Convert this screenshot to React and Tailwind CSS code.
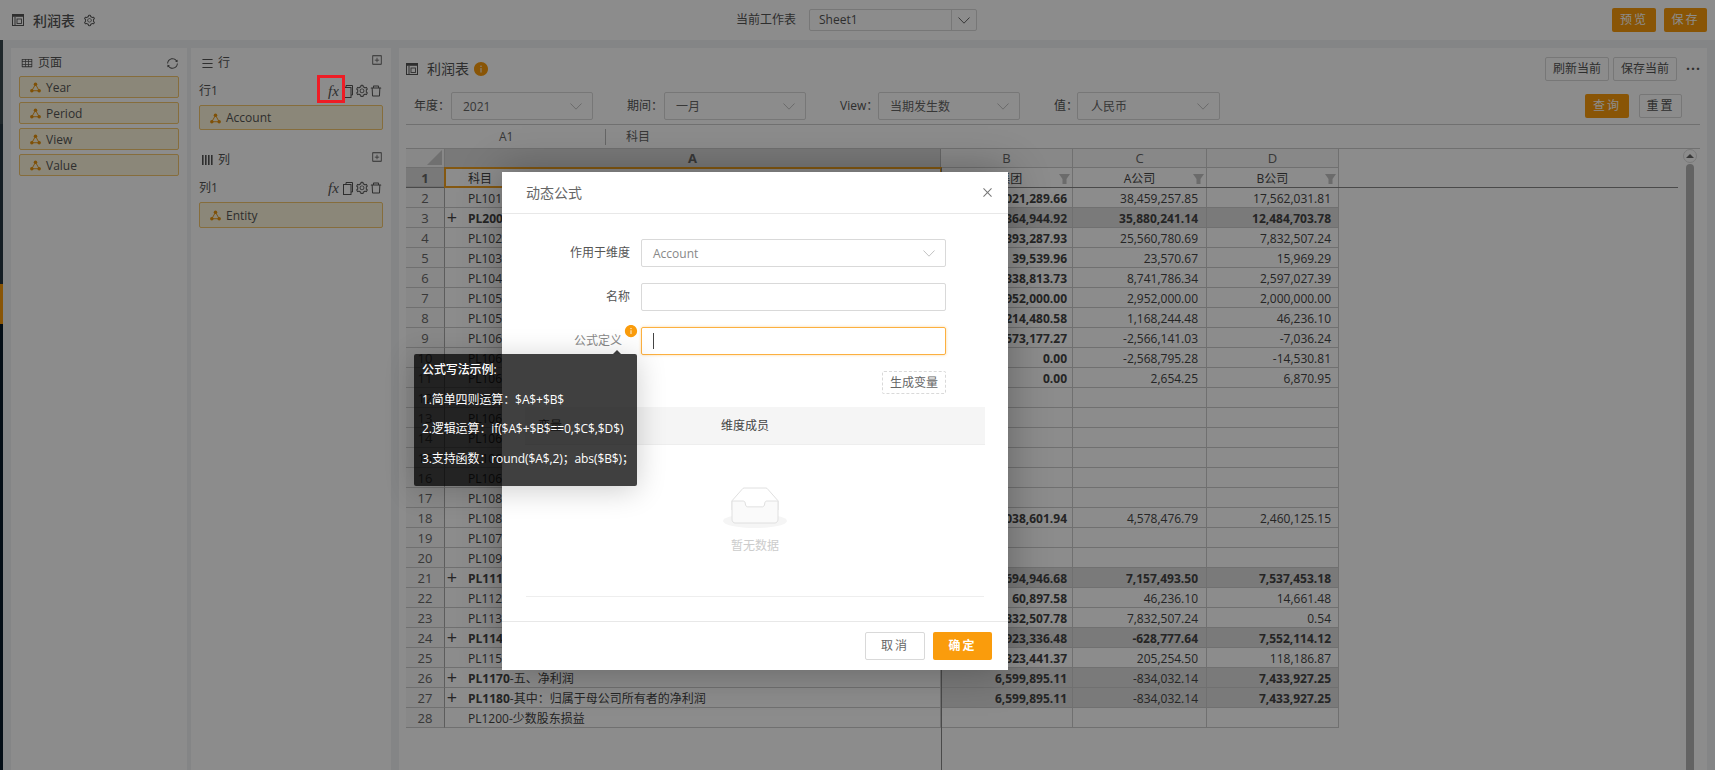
import React from "react";
import { AiOutlineSetting, AiOutlineSync, AiOutlineTable, AiOutlineMenu, AiOutlinePlusSquare, AiOutlineDelete, AiFillInfoCircle, AiOutlineClose } from "react-icons/ai";

const rows = [
  { label: "科目", b: "A集团", c: "A公司", d: "B公司", head: true },
  { label: "PL1010", b: "56,021,289.66", c: "38,459,257.85", d: "17,562,031.81" },
  { label: "PL2000", b: "48,364,944.92", c: "35,880,241.14", d: "12,484,703.78", fold: true, shade: true },
  { label: "PL1020", b: "33,393,287.93", c: "25,560,780.69", d: "7,832,507.24" },
  { label: "PL1030", b: "39,539.96", c: "23,570.67", d: "15,969.29" },
  { label: "PL1040", b: "11,338,813.73", c: "8,741,786.34", d: "2,597,027.39" },
  { label: "PL1050", b: "4,952,000.00", c: "2,952,000.00", d: "2,000,000.00" },
  { label: "PL1055", b: "1,214,480.58", c: "1,168,244.48", d: "46,236.10" },
  { label: "PL1060", b: "-2,573,177.27", c: "-2,566,141.03", d: "-7,036.24" },
  { label: "PL1061", b: "0.00", c: "-2,568,795.28", d: "-14,530.81" },
  { label: "PL1062", b: "0.00", c: "2,654.25", d: "6,870.95" },
  { label: "PL1063" },
  { label: "PL1064" },
  { label: "PL1065" },
  { label: "PL1066" },
  { label: "PL1067" },
  { label: "PL1080" },
  { label: "PL1085", b: "7,038,601.94", c: "4,578,476.79", d: "2,460,125.15" },
  { label: "PL1070" },
  { label: "PL1090" },
  { label: "PL1110", b: "14,694,946.68", c: "7,157,493.50", d: "7,537,453.18", fold: true, shade: true },
  { label: "PL1120", b: "60,897.58", c: "46,236.10", d: "14,661.48" },
  { label: "PL1130", b: "7,832,507.78", c: "7,832,507.24", d: "0.54" },
  { label: "PL1140", b: "6,923,336.48", c: "-628,777.64", d: "7,552,114.12", fold: true, shade: true },
  { label: "PL1150", b: "323,441.37", c: "205,254.50", d: "118,186.87" },
  { label: "PL1170-五、净利润", b: "6,599,895.11", c: "-834,032.14", d: "7,433,927.25", fold: true, shade: true, thinC: true },
  { label: "PL1180-其中：归属于母公司所有者的净利润", b: "6,599,895.11", c: "-834,032.14", d: "7,433,927.25", fold: true, shade: true, thinC: true },
  { label: "PL1200-少数股东损益" },
];

const ReportIcon = ({ className }) => (
  <svg viewBox="0 0 12 12" className={className} fill="none" stroke="currentColor">
    <rect x="0.5" y="0.5" width="11" height="11" strokeWidth="1" />
    <rect x="0.5" y="0.5" width="11" height="2" fill="currentColor" strokeWidth="0.6" />
    <path d="M3 3v8.5" strokeWidth="1" />
    <rect x="5" y="5" width="4.5" height="4.5" strokeWidth="0.9" />
  </svg>
);

const DimIcon = () => (
  <svg viewBox="0 0 12 12" className="h-[11px] w-[11px] shrink-0 text-[#e8930c]" fill="currentColor" stroke="currentColor">
    <path d="M6 2.5 2 9.5h8z" fill="none" strokeWidth="1" />
    <circle cx="6" cy="2.5" r="1.9" stroke="none" />
    <circle cx="2" cy="9.5" r="1.9" stroke="none" />
    <circle cx="10" cy="9.5" r="1.9" stroke="none" />
  </svg>
);

const Chevron = ({ className }) => (
  <svg viewBox="0 0 12 7" className={className} fill="none" stroke="currentColor" strokeWidth="0.9">
    <path d="M0.5 0.5 6 6.2l5.5-5.7" />
  </svg>
);

const CopyIcon = () => (
  <svg viewBox="0 0 10 13" className="h-[13px] w-[10px] shrink-0" fill="none" stroke="currentColor" strokeWidth="1">
    <path d="M3 2.5V0.5h6.5v9.5H8" />
    <rect x="0.5" y="2.5" width="7.5" height="10" />
  </svg>
);

const Funnel = () => (
  <svg viewBox="0 0 11 10" className="h-[10px] w-[11px] text-[#c4c4c4]" fill="currentColor">
    <path d="M0 0h11L7.5 5v5h-4V5z" />
  </svg>
);

const Chip = ({ name, h = "h-[22px]" }) => (
  <div className={`flex ${h} items-center gap-[5px] rounded-[2px] border border-[#f5c76e] bg-[#fdf6dc] pl-[10px] pt-[1px] text-[12px] text-[#555]`}>
    <DimIcon />
    {name}
  </div>
);

const Select = ({ value, className }) => (
  <div className={`flex h-[28px] items-center justify-between rounded-[2px] border border-[#d9d9d9] pl-[11px] pr-[10px] text-[12px] text-[#666] ${className}`}>
    <span className="pt-[1px]">{value}</span>
    <Chevron className="h-[7px] w-[12px] text-[#bbb]" />
  </div>
);

const OrangeBtn = ({ children, className = "" }) => (
  <button className={`flex h-[24px] items-center justify-center rounded-[2px] bg-[#fa9c0c] text-[12px] tracking-[2px] text-white ${className}`}>{children}</button>
);

const GhostBtn = ({ children, className = "" }) => (
  <button className={`flex h-[24px] items-center justify-center rounded-[2px] border border-[#d9d9d9] text-[12px] text-[#555] ${className}`}>{children}</button>
);

const ToolIcons = () => (
  <div className="flex items-center text-[#555]">
    <span className="mr-[3px] w-[12px] font-['Liberation_Serif',serif] text-[15px] italic leading-none">fx</span>
    <CopyIcon />
    <AiOutlineSetting className="ml-[2px] h-[14px] w-[14px]" />
    <AiOutlineDelete className="h-[14px] w-[14px]" />
  </div>
);

const SheetRow = ({ row, index }) => {
  const first = index === 0;
  const numCls = first ? "bg-[#dcdcdc]" : "bg-[#f7f7f7]";
  const bgCls = row.shade ? "bg-[#dedede]" : "";
  return (
    <div className={`flex h-[20px] w-[1272px] text-[12px] leading-[21px] text-[#444] ${first ? "border-b border-[#888]" : ""}`}>
      <div className={`w-[39px] shrink-0 border-b border-r border-b-[#ccc] border-r-[#aaa] text-center text-[13px] text-[#666] ${numCls} ${first ? "font-bold" : ""}`}>{index + 1}</div>
      <div className={`flex w-[496px] shrink-0 border-b border-r border-[#ccc] ${first ? "outline-2 -outline-offset-1 outline-[#f0a020]" : ""}`}>
        <span className="mr-[9px] w-[14px] shrink-0 text-center text-[18px] font-medium leading-[18px]">{row.fold ? "+" : ""}</span>
        <span className="truncate">
          {row.fold && row.label.includes("-") ? (
            <>
              <b>{row.label.split("-")[0]}</b>-{row.label.split("-")[1]}
            </>
          ) : row.fold ? <b>{row.label}</b> : row.label}
        </span>
      </div>
      {first ? (
        <>
          {[["w-[132px]", row.b], ["w-[134px]", row.c], ["w-[132px]", row.d]].map(([w, t]) => (
            <div key={t} className={`relative ${w} shrink-0 border-r border-[#ccc] text-center`}>
              {t}
              <span className="absolute right-[2px] top-[6px]"><Funnel /></span>
            </div>
          ))}
        </>
      ) : (
        <>
          <div className={`w-[132px] shrink-0 truncate border-b border-r border-[#ccc] pr-[5px] text-right font-bold ${bgCls}`}>{row.b}</div>
          <div className={`w-[134px] shrink-0 truncate border-b border-r border-[#ccc] pr-[8px] text-right ${bgCls} ${row.shade && !row.thinC ? "font-bold pr-[6px]" : ""}`}>{row.c}</div>
          <div className={`w-[132px] shrink-0 truncate border-b border-r border-[#ccc] pr-[7px] text-right ${bgCls} ${row.shade ? "font-bold pr-[5px]" : ""}`}>{row.d}</div>
        </>
      )}
    </div>
  );
};

export default function App() {
  return (
    <div className="relative h-[770px] w-[1715px] overflow-hidden bg-[#f0f2f5] font-['Open_Sans','Noto_Sans_CJK_SC',sans-serif] text-[12px] text-[#444]">
      <header className="flex h-[40px] items-center bg-white text-[#555]">
        <div className="flex w-[736px] items-center pl-[12px]">
          <ReportIcon className="h-[12px] w-[12px]" />
          <span className="ml-[9px] text-[14px] font-medium">利润表</span>
          <AiOutlineSetting className="ml-[8px] h-[13px] w-[13px]" />
        </div>
        <span className="w-[73px] text-[12px]">当前工作表</span>
        <div className="flex h-[22px] w-[168px] rounded-[2px] border border-[#d9d9d9]">
          <span className="flex-1 pl-[9px] text-[12px] leading-[20px]">Sheet1</span>
          <span className="flex w-[25px] items-center justify-center border-l border-[#d9d9d9]">
            <Chevron className="h-[7px] w-[12px]" />
          </span>
        </div>
        <div className="ml-auto flex gap-[8px] pr-[8px]">
          <OrangeBtn className="w-[44px]">预览</OrangeBtn>
          <OrangeBtn className="w-[43px]">保存</OrangeBtn>
        </div>
      </header>

      <div className="flex h-[730px]">
        <div className="flex w-[3px] shrink-0 flex-col">
          <div className="h-[84px] bg-[#3a474f]" />
          <div className="h-[160px] bg-[#263540]" />
          <div className="h-[40px] bg-[#fa9c0c]" />
          <div className="flex-1 bg-[#091b28]" />
        </div>
        <div className="flex flex-1 pl-[8px] pt-[8px]">
          <section className="mr-[4px] w-[176px] bg-white px-[8px] pt-[7px]">
            <div className="flex h-[21px] items-center pb-[5px] text-[#555]">
              <AiOutlineTable className="ml-[2px] h-[12px] w-[12px]" />
              <span className="ml-[5px]">页面</span>
              <AiOutlineSync className="ml-auto h-[13px] w-[13px]" />
            </div>
            <div className="flex flex-col gap-[4px]">
              <Chip name="Year" />
              <Chip name="Period" />
              <Chip name="View" />
              <Chip name="Value" />
            </div>
          </section>

          <section className="mr-[8px] w-[200px] bg-white px-[8px] pt-[7px] text-[#555]">
            <div className="flex h-[16px] items-center">
              <AiOutlineMenu className="ml-[2px] h-[13px] w-[13px]" />
              <span className="ml-[4px]">行</span>
              <AiOutlinePlusSquare className="mb-[6px] ml-auto h-[12px] w-[12px]" />
            </div>
            <div className="mt-[9px] flex h-[22px] items-center justify-between">
              <span>行1</span>
              <ToolIcons />
            </div>
            <div className="mt-[3px]">
              <Chip name="Account" h="h-[25px]" />
            </div>
            <div className="mt-[22px] flex h-[16px] items-center">
              <svg viewBox="0 0 12 12" className="ml-[2px] h-[12px] w-[12px]" fill="currentColor">
                <path d="M1 1h1.6v10H1zM4 1h1.6v10H4zM7 1h1.6v10H7zM10 1h1.6v10H10z" />
              </svg>
              <span className="ml-[5px]">列</span>
              <AiOutlinePlusSquare className="mb-[6px] ml-auto h-[12px] w-[12px]" />
            </div>
            <div className="mt-[9px] flex h-[22px] items-center justify-between">
              <span>列1</span>
              <ToolIcons />
            </div>
            <div className="mt-[3px]">
              <Chip name="Entity" h="h-[26px]" />
            </div>
          </section>

          <main className="flex w-[1308px] flex-col bg-white pl-[7px] pr-[7px]">
            <div className="flex h-[44px] items-center pb-[3px]">
              <ReportIcon className="h-[12px] w-[12px] text-[#555]" />
              <span className="ml-[9px] text-[14px] text-[#555]">利润表</span>
              <AiFillInfoCircle className="ml-[4px] h-[16px] w-[16px] text-[#fa9c0c]" />
              <div className="ml-auto flex items-center gap-[4px]">
                <GhostBtn className="w-[64px]">刷新当前</GhostBtn>
                <GhostBtn className="w-[64px]">保存当前</GhostBtn>
                <span className="ml-[5px] w-[14px] whitespace-nowrap text-[14px] font-bold leading-none tracking-[1px] text-[#555]">···</span>
              </div>
            </div>
            <div className="flex h-[32px] items-start text-[#555]">
              <div className="flex items-center pl-[8px]">
                <span className="w-[37px]">年度：</span>
                <Select value="2021" className="w-[142px]" />
                <span className="ml-[34px] w-[37px]">期间：</span>
                <Select value="一月" className="w-[142px]" />
                <span className="ml-[34px] w-[38px]">View：</span>
                <Select value="当期发生数" className="w-[142px]" />
                <span className="ml-[34px] w-[23px]">值：</span>
                <Select value="人民币" className="w-[143px] pl-[13px]" />
              </div>
              <div className="ml-auto mt-[2px] flex gap-[10px] pr-[18px]">
                <OrangeBtn className="w-[44px]">查询</OrangeBtn>
                <GhostBtn className="w-[43px] tracking-[2px]">重置</GhostBtn>
              </div>
            </div>
            <div className="flex h-[25px] items-center border-y border-[#ccc] text-[#666]">
              <span className="w-[199px] pl-[93px]">A1</span>
              <span className="h-[16px] border-l border-[#bbb]" />
              <span className="ml-[20px]">科目</span>
            </div>
            <div className="relative flex flex-1">
              <div className="relative w-[1272px]">
                <div className="flex h-[19px] w-[1272px] text-[13px] leading-[19px] text-[#666]">
                  <div className="flex w-[39px] shrink-0 items-end justify-end border-b border-r border-[#ccc] bg-[#f7f7f7] pb-[2px] pr-[2px]">
                    <svg viewBox="0 0 15 15" className="h-[15px] w-[15px] text-[#ccc]" fill="currentColor"><path d="M15 0v15H0z" /></svg>
                  </div>
                  <div className="w-[496px] shrink-0 border-b border-r border-[#bbb] bg-[#dcdcdc] text-center font-bold">A</div>
                  <div className="w-[132px] shrink-0 border-b border-r border-[#ccc] bg-[#f7f7f7] text-center">B</div>
                  <div className="w-[134px] shrink-0 border-b border-r border-[#ccc] bg-[#f7f7f7] text-center">C</div>
                  <div className="w-[132px] shrink-0 border-b border-r border-[#ccc] bg-[#f7f7f7] text-center">D</div>
                </div>
                {rows.map((row, i) => (
                  <SheetRow key={i} row={row} index={i} />
                ))}
                <div className="absolute bottom-0 left-[535px] top-[19px] w-px bg-[#888]" />
              </div>
              <div className="ml-[6px] flex w-[12px] flex-col items-center">
                <div className="flex h-[14px] w-[14px] items-center justify-center rounded-full border border-[#ddd]">
                  <span className="h-0 w-0 border-x-[4px] border-b-[4px] border-x-transparent border-b-[#666]" />
                </div>
                <div className="mt-[1px] w-[8px] flex-1 rounded-t-[4px] bg-[#b5b5b5]" />
              </div>
            </div>
          </main>
        </div>
      </div>

      {/* mask and dialog */}
      <div className="absolute inset-0 bg-black/45" />
      <div className="absolute left-[502px] top-[172px] flex h-[498px] w-[506px] flex-col bg-white text-[#555] shadow-[0_0_40px_rgba(0,0,0,0.3)]">
        <div className="flex h-[42px] items-center justify-between border-b border-[#e8e8e8] pl-[24px] pr-[14px]">
          <span className="text-[14px] text-[#666]">动态公式</span>
          <AiOutlineClose className="h-[13px] w-[13px] text-[#777]" />
        </div>
        <div className="flex flex-1 flex-col pt-[25px]">
          <div className="flex h-[28px] items-center">
            <label className="w-[128px] text-right">作用于维度</label>
            <Select value="Account" className="ml-[11px] w-[305px] text-[#888]" />
          </div>
          <div className="mt-[16px] flex h-[28px] items-center">
            <label className="w-[128px] text-right">名称</label>
            <div className="ml-[11px] h-[28px] w-[305px] rounded-[2px] border border-[#d9d9d9]" />
          </div>
          <div className="mt-[16px] flex h-[28px] items-center">
            <label className="relative w-[120px] text-right text-[#888]">
              公式定义
              <AiFillInfoCircle className="absolute left-[122px] top-[-8px] h-[14px] w-[14px] text-[#fa9c0c]" />
            </label>
            <div className="ml-[19px] flex h-[28px] w-[305px] items-center rounded-[2px] border border-[#fcb040] pl-[11px] shadow-[0_0_3px_rgba(250,156,12,0.4)]">
              <span className="h-[16px] w-px bg-[#444]" />
            </div>
          </div>
          <div className="mt-[16px] flex justify-end pr-[62px]">
            <button className="h-[23px] w-[64px] rounded-[2px] border border-dashed border-[#d9d9d9] text-[12px] text-[#666]">生成变量</button>
          </div>
          <div className="mx-[23px] mt-[13px] flex h-[38px] items-center border-b border-[#eee] bg-[#f5f5f5] pt-[1px] text-[#444]">
            <span className="w-[50px] text-center">变量</span>
            <span className="w-[340px] text-center">维度成员</span>
          </div>
          <div className="mt-[42px] flex flex-col items-center text-[#ccc]">
            <svg viewBox="0 0 64 41" className="h-[41px] w-[64px]">
              <g transform="translate(0 1)" fill="none" fillRule="evenodd">
                <ellipse fill="#f5f5f5" cx="32" cy="33" rx="32" ry="7" />
                <g fillRule="nonzero" stroke="#e0e0e0">
                  <path d="M55 12.76L44.854 1.258C44.367.474 43.656 0 42.907 0H21.093c-.749 0-1.46.474-1.947 1.257L9 12.761V22h46v-9.24z" />
                  <path d="M41.613 15.931c0-1.605.994-2.93 2.227-2.931H55v18.137C55 33.26 53.68 35 52.05 35h-40.1C10.32 35 9 33.259 9 31.137V13h11.16c1.233 0 2.227 1.323 2.227 2.928v.022c0 1.605 1.005 2.901 2.237 2.901h14.752c1.232 0 2.237-1.308 2.237-2.913v-.007z" fill="#fafafa" />
                </g>
              </g>
            </svg>
            <span className="mt-[9px]">暂无数据</span>
          </div>
          <div className="mx-[24px] mt-auto mb-[24px] border-t border-[#eee]" />
        </div>
        <div className="flex h-[49px] items-center justify-end gap-[8px] border-t border-[#e8e8e8] pb-[1px] pr-[16px]">
          <button className="h-[28px] w-[60px] rounded-[2px] border border-[#d9d9d9] text-[12px] tracking-[2px] text-[#666]">取消</button>
          <button className="h-[28px] w-[59px] rounded-[2px] bg-[#fa9c0c] text-[12px] font-bold tracking-[2px] text-white">确定</button>
        </div>
      </div>

      <div className="absolute left-[414px] top-[354px] flex h-[132px] w-[223px] flex-col justify-between rounded-[2px] bg-black/75 pb-[17px] pl-[8px] pt-[6px] text-[12px] leading-[20px] tracking-[-0.1px] text-white shadow-[0_4px_30px_rgba(0,0,0,0.2)]">
        <p className="font-medium">公式写法示例:</p>
        <p>1.简单四则运算：$A$+$B$</p>
        <p>2.逻辑运算：if($A$+$B$==0,$C$,$D$)</p>
        <p>3.支持函数：round($A$,2)；abs($B$)；</p>
      </div>
      <span className="absolute left-[613px] top-[350px] h-0 w-0 border-x-[4px] border-b-[4px] border-x-transparent border-b-black/75" />

      <div className="absolute left-[317px] top-[75px] h-[28px] w-[28px] border-[3px] border-[#ee1c25]" />
    </div>
  );
}
